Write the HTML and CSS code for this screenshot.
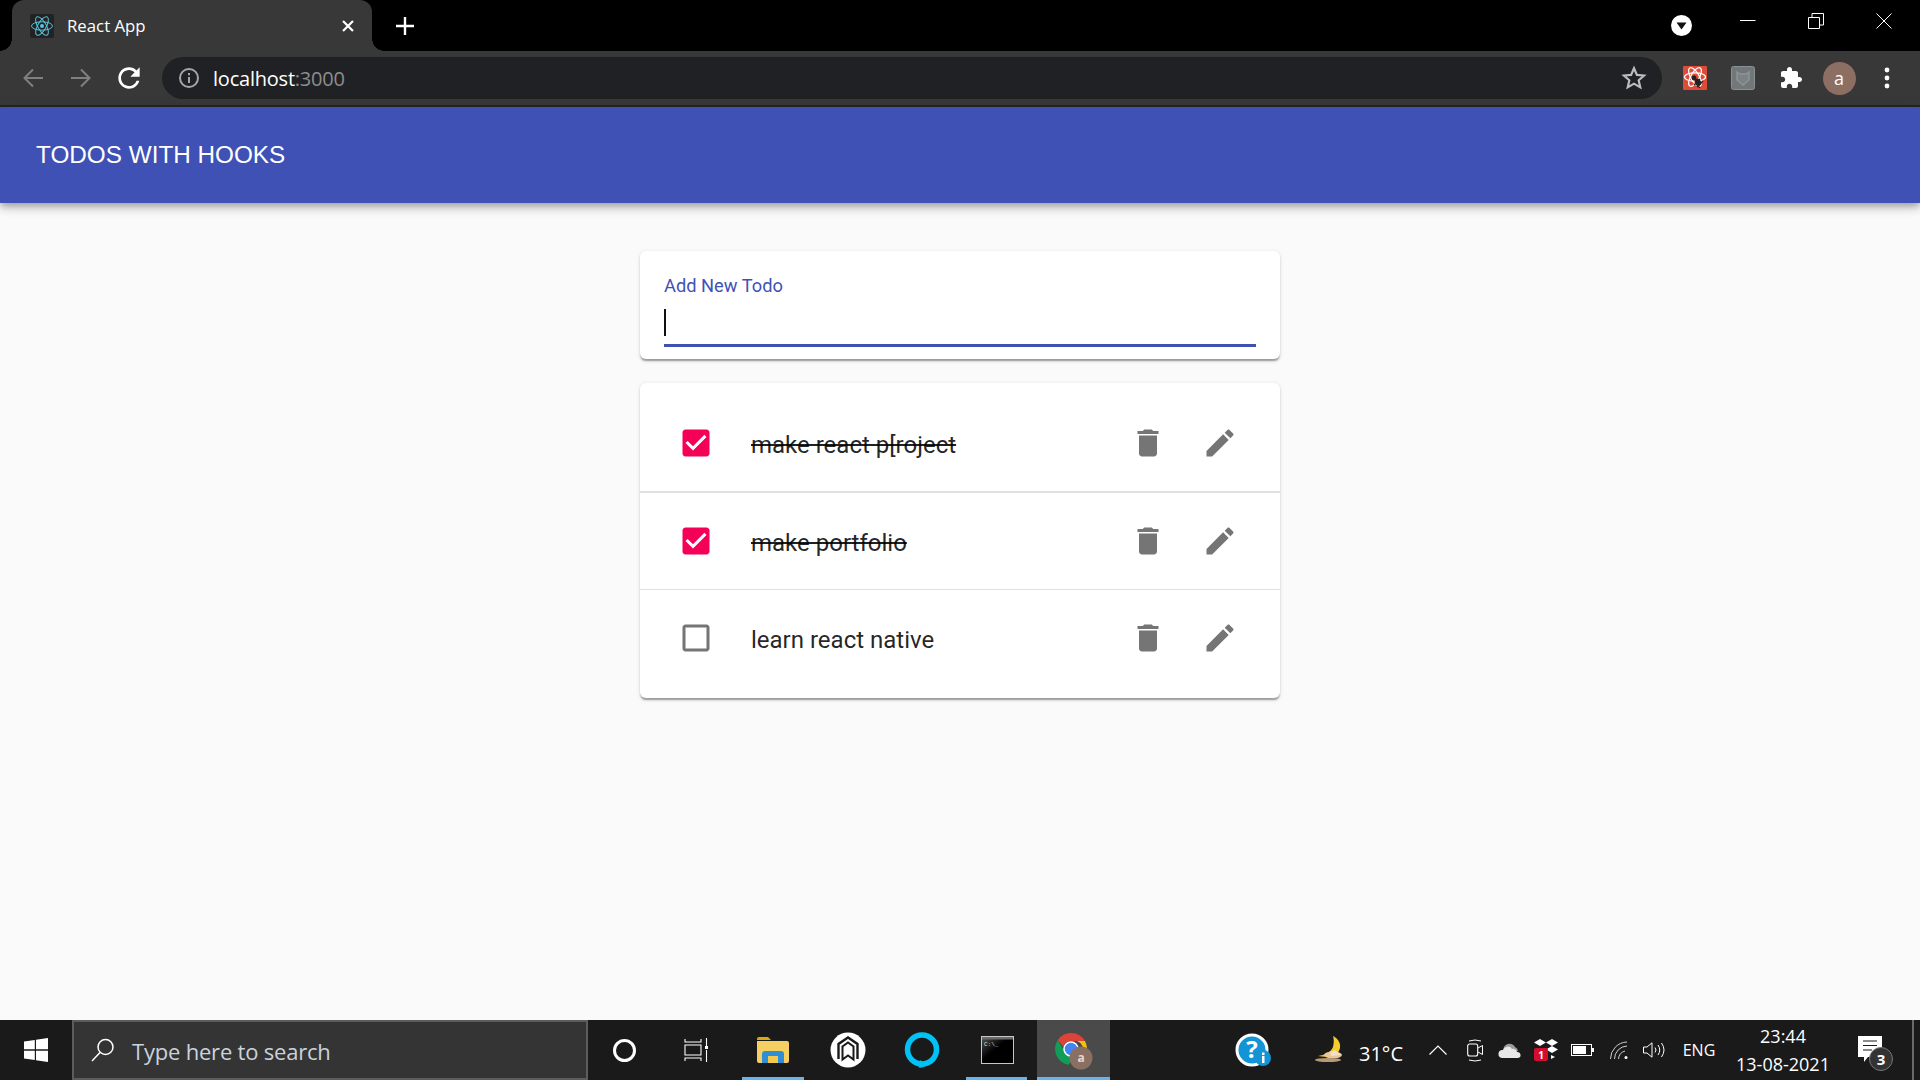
FILE: index.html
```html
<!DOCTYPE html>
<html lang="en">
<head>
<meta charset="utf-8">
<title>React App</title>
<link rel="stylesheet" href="styles.css">
</head>
<body>
<div class="screen">
  <div class="tabstrip">
    <div class="tab">
      <svg class="favicon" viewBox="0 0 24 24"><rect width="24" height="24" rx="2" fill="#222"/><g fill="none" stroke="#58c4dc" stroke-width="1"><ellipse cx="12" cy="12" rx="10.5" ry="4.2"/><ellipse cx="12" cy="12" rx="10.5" ry="4.2" transform="rotate(60 12 12)"/><ellipse cx="12" cy="12" rx="10.5" ry="4.2" transform="rotate(120 12 12)"/></g><circle cx="12" cy="12" r="2" fill="#58c4dc"/></svg>
      <span class="tab-title">React App</span>
      <svg class="tab-close" viewBox="0 0 12 12"><path d="M1 1l10 10M11 1L1 11" stroke="#fff" stroke-width="2.2"/></svg>
    </div>
    <div class="newtab"><svg class="plus" viewBox="0 0 18 18"><path d="M9 0v18M0 9h18" stroke="#fff" stroke-width="2.4"/></svg></div>
    <div class="profile-drop"><svg class="drop-icon" viewBox="0 0 21 21"><circle cx="10.5" cy="10.5" r="10.5" fill="#fff"/><path d="M5.5 7.5h10l-5 7z" fill="#111"/></svg></div>
    <div class="winbtn"><svg class="win-ico" viewBox="0 0 16 16"><path d="M0 7.5h15.5" stroke="#fff"/></svg></div>
    <div class="winbtn"><svg class="win-ico" viewBox="0 0 16 16"><path d="M.5 4.5h11v11H.5zM4 4.5V.5h11.5v11.5h-4" fill="none" stroke="#fff"/></svg></div>
    <div class="winbtn"><svg class="win-ico" viewBox="0 0 16 16"><path d="M.5.5l15 15M15.5.5l-15 15" stroke="#fff"/></svg></div>
  </div>

  <div class="toolbar">
    <div class="navbtn"><svg class="ico24" viewBox="0 0 24 24"><path d="M22 12H4M12 3.5L3.5 12l8.5 8.5" fill="none" stroke="#808080" stroke-width="2"/></svg></div>
    <div class="navbtn"><svg class="ico24" viewBox="0 0 24 24"><path d="M2 12h18M12 3.5l8.500 8.500L12 20.500" fill="none" stroke="#808080" stroke-width="2"/></svg></div>
    <div class="navbtn"><svg class="ico30" viewBox="0 0 24 24"><path fill="#fff" d="M17.650 6.350C16.200 4.900 14.210 4 12 4c-4.420 0-7.990 3.580-7.990 8s3.570 8 7.990 8c3.730 0 6.840-2.550 7.730-6h-2.080c-.82 2.330-3.040 4-5.650 4-3.310 0-6-2.690-6-6s2.690-6 6-6c1.660 0 3.140.69 4.220 1.780L13 11h7V4l-2.350 2.350z"/></svg></div>
    <div class="omnibox">
      <svg class="info" viewBox="0 0 20 20"><circle cx="10" cy="10" r="9" fill="none" stroke="#a6a6a6" stroke-width="2"/><path d="M10 9v6M10 5v2.200" stroke="#a6a6a6" stroke-width="2"/></svg>
      <span class="url">localhost<span class="url-port">:3000</span></span>
      <svg class="star" viewBox="0 0 24 24"><path d="M12 3l2.700 6.100 6.600.6-5 4.400 1.500 6.500L12 17.200l-5.800 3.400 1.500-6.500-5-4.400 6.600-.6z" fill="none" stroke="#bdbdbd" stroke-width="2"/></svg>
    </div>
    <div class="extensions">
      <div class="navbtn"><svg class="ico24" viewBox="0 0 24 24"><rect width="24" height="24" rx="1" fill="#dd4b39"/><g fill="none" stroke="#fff" stroke-width="1.200"><ellipse cx="12" cy="11" rx="10.500" ry="4.200"/><ellipse cx="12" cy="11" rx="10.500" ry="4.200" transform="rotate(60 12 11)"/><ellipse cx="12" cy="11" rx="10.500" ry="4.200" transform="rotate(120 12 11)"/></g><circle cx="11" cy="12" r="2.400" fill="#222"/><ellipse cx="15" cy="16" rx="2.800" ry="3.800" fill="#222" transform="rotate(-40 15 16)"/><path d="M11 19l6-6M14 21l6-6M12 17l5 5" stroke="#222" stroke-width="1.200"/></svg></div>
      <div class="navbtn"><svg class="ico24" viewBox="0 0 24 24"><rect x=".5" y=".5" width="23" height="23" rx="2" fill="#727779" stroke="#8b9193"/><path d="M6 6l3 2h6l3-2v8l-6 5-6-5z" fill="#7d8385" stroke="#8e9496" stroke-width="1.500"/></svg></div>
      <div class="navbtn"><svg class="ico24" viewBox="0 0 24 24"><path fill="#fff" d="M20.500 11H19V7c0-1.100-.9-2-2-2h-4V3.500C13 2.120 11.880 1 10.500 1S8 2.120 8 3.500V5H4c-1.100 0-1.990.9-1.990 2v3.800H3.500c1.490 0 2.700 1.210 2.700 2.700s-1.210 2.700-2.700 2.700H2V20c0 1.100.9 2 2 2h3.800v-1.500c0-1.490 1.210-2.700 2.700-2.700 1.490 0 2.700 1.210 2.700 2.700V22H17c1.100 0 2-.9 2-2v-4h1.500c1.380 0 2.500-1.120 2.500-2.500S21.880 11 20.500 11z"/></svg></div>
      <div class="navbtn"><span class="avatar">a</span></div>
      <div class="navbtn"><svg class="dots" viewBox="0 0 6 22"><circle cx="3" cy="3" r="2.400" fill="#fff"/><circle cx="3" cy="11" r="2.400" fill="#fff"/><circle cx="3" cy="19" r="2.400" fill="#fff"/></svg></div>
    </div>
  </div>
  <div class="toolbar-line"></div>

  <header class="appbar"><h1 class="app-title">TODOS WITH HOOKS</h1></header>

  <main class="page">
    <section class="card form-card">
      <label class="field-label">Add New Todo</label>
      <div class="caret"></div>
      <div class="underline"></div>
    </section>

    <section class="card list-card">
      <div class="row">
        <svg class="mui check-on" viewBox="0 0 24 24"><path d="M19 3H5c-1.110 0-2 .9-2 2v14c0 1.100.89 2 2 2h14c1.110 0 2-.9 2-2V5c0-1.100-.89-2-2-2zm-9 14l-5-5 1.410-1.410L10 14.170l7.590-7.590L19 8l-9 9z"/></svg>
        <span class="todo done">make react p[roject</span>
        <svg class="mui act" viewBox="0 0 24 24"><path d="M6 19c0 1.100.9 2 2 2h8c1.100 0 2-.9 2-2V7H6v12zM19 4h-3.500l-1-1h-5l-1 1H5v2h14V4z"/></svg>
        <svg class="mui act" viewBox="0 0 24 24"><path d="M3 17.250V21h3.750L17.810 9.940l-3.750-3.750L3 17.250zM20.710 7.040c.39-.39.39-1.020 0-1.410l-2.340-2.340c-.39-.39-1.020-.39-1.410 0l-1.830 1.830 3.750 3.750 1.830-1.830z"/></svg>
      </div>
      <div class="divider thick"></div>
      <div class="row">
        <svg class="mui check-on" viewBox="0 0 24 24"><path d="M19 3H5c-1.110 0-2 .9-2 2v14c0 1.100.89 2 2 2h14c1.110 0 2-.9 2-2V5c0-1.100-.89-2-2-2zm-9 14l-5-5 1.410-1.410L10 14.170l7.590-7.590L19 8l-9 9z"/></svg>
        <span class="todo done">make portfolio</span>
        <svg class="mui act" viewBox="0 0 24 24"><path d="M6 19c0 1.100.9 2 2 2h8c1.100 0 2-.9 2-2V7H6v12zM19 4h-3.500l-1-1h-5l-1 1H5v2h14V4z"/></svg>
        <svg class="mui act" viewBox="0 0 24 24"><path d="M3 17.250V21h3.750L17.810 9.940l-3.750-3.750L3 17.250zM20.710 7.040c.39-.39.39-1.020 0-1.410l-2.340-2.340c-.39-.39-1.020-.39-1.410 0l-1.830 1.830 3.750 3.750 1.830-1.830z"/></svg>
      </div>
      <div class="divider"></div>
      <div class="row">
        <svg class="mui act" viewBox="0 0 24 24"><path d="M19 5v14H5V5h14m0-2H5c-1.100 0-2 .9-2 2v14c0 1.100.9 2 2 2h14c1.100 0 2-.9 2-2V5c0-1.100-.9-2-2-2z"/></svg>
        <span class="todo">learn react native</span>
        <svg class="mui act" viewBox="0 0 24 24"><path d="M6 19c0 1.100.9 2 2 2h8c1.100 0 2-.9 2-2V7H6v12zM19 4h-3.500l-1-1h-5l-1 1H5v2h14V4z"/></svg>
        <svg class="mui act" viewBox="0 0 24 24"><path d="M3 17.250V21h3.750L17.810 9.940l-3.750-3.750L3 17.250zM20.710 7.040c.39-.39.39-1.020 0-1.410l-2.340-2.340c-.39-.39-1.020-.39-1.410 0l-1.830 1.830 3.750 3.750 1.830-1.830z"/></svg>
      </div>
    </section>
  </main>

  <footer class="taskbar">
    <div class="start"><svg class="winlogo" viewBox="0 0 24 24"><path fill="#fff" d="M0 3.500l10.800-1.500v9.300H0zM12 1.800L24 0v11.300H12zM0 12.700h10.800V22L0 20.500zM12 12.700h12V24l-12-1.800z"/></svg></div>
    <div class="searchbox">
      <svg class="magnifier" viewBox="0 0 24 24"><circle cx="14.500" cy="9" r="7.500" fill="none" stroke="#fff" stroke-width="1.500"/><path d="M9 14.500L1 23" stroke="#fff" stroke-width="1.500"/></svg>
      <span class="search-text">Type here to search</span>
    </div>
    <div class="tb-slot"><span class="cortana"></span></div>
    <div class="tb-slot"><svg class="taskview" viewBox="0 0 24 24"><path d="M1 1v3h16V1M1 23v-3h16v3M1 7h16v10H1zM22.500 0v8M22.500 12v12" fill="none" stroke="#fff" stroke-width="1.100"/><rect x="21" y="8" width="3" height="3" fill="#fff"/></svg></div>
    <div class="apps">
      <div class="app running"><svg class="app-ico" viewBox="0 0 32 26"><path fill="#e0a50f" d="M0 2a2 2 0 0 1 2-2h9l3 3h-14z"/><path fill="#f6cf62" d="M0 4h30a2 2 0 0 1 2 2v18a2 2 0 0 1-2 2H2a2 2 0 0 1-2-2z"/><path fill="#2f8fd6" d="M5 26V17a3 3 0 0 1 3-3h16a3 3 0 0 1 3 3v9h-6v-7H11v7z"/><rect x="11" y="19" width="10" height="7" fill="#f4c94f"/></svg></div>
      <div class="app"><svg class="app-ico round" viewBox="0 0 36 36"><circle cx="18" cy="18" r="17.500" fill="#fff"/><path d="M8.500 27V12L18 5.500 27.500 12v15" fill="none" stroke="#1a1a1a" stroke-width="2.400"/><path d="M12.500 27.500V14.500L18 10.500l5.500 4v13L18 23.500z" fill="none" stroke="#1a1a1a" stroke-width="2"/></svg></div>
      <div class="app"><svg class="app-ico round" viewBox="0 0 36 36"><circle cx="18" cy="17.500" r="14.500" fill="none" stroke="#00c2f5" stroke-width="5.500"/><path d="M16 28l-1.500 7.500c3 .5 6-.5 8-2.500z" fill="#00c2f5"/></svg></div>
      <div class="app running"><svg class="app-ico term" viewBox="0 0 33 28"><defs><linearGradient id="termglow" x1="0" y1="0" x2="1" y2="1"><stop offset="0" stop-color="#555"/><stop offset=".45" stop-color="#000"/></linearGradient></defs><rect x=".5" y=".5" width="32" height="27" fill="url(#termglow)" stroke="#c8c8c8"/><rect x="1" y="1" width="31" height="2.500" fill="#6a6a6a"/><text class="term-text" x="3" y="10">C:\_</text></svg></div>
      <div class="app active running"><svg class="app-ico chrome" viewBox="0 0 38 38"><path fill="#db4437" d="M16 0a16 16 0 0 1 13.900 8H16a8 8 0 0 0-7.700 5.800L2.800 7A16 16 0 0 1 16 0z"/><path fill="#f4c20d" d="M29.900 8a16 16 0 0 1-10 23.500l7-12A8 8 0 0 0 22 8z"/><path fill="#0f9d58" d="M2.800 7l7 12a8 8 0 0 0 9.500 3.800l-5.500 9A16 16 0 0 1 2.800 7z"/><circle cx="16" cy="16" r="7" fill="#4285f4" stroke="#fff" stroke-width="1.500"/><circle cx="26" cy="25" r="11.500" fill="#8a6f63"/><text class="chrome-a" x="26" y="29" text-anchor="middle">a</text></svg></div>
    </div>
    <div class="tray">
      <div class="s-help"><svg class="help" viewBox="0 0 38 34"><circle cx="17" cy="17" r="15" fill="#1394d6" stroke="#fff" stroke-width="3"/><text class="help-q" x="17" y="25" text-anchor="middle">?</text><circle cx="28" cy="25" r="8" fill="#1394d6"/><rect x="27" y="23" width="2.500" height="7" fill="#fff"/><rect x="27" y="19.500" width="2.500" height="2.500" fill="#fff"/></svg></div>
      <div class="s-moon"><svg class="moon" viewBox="0 0 34 28"><path d="M19 0c6 3 9 9 6 15-3 5-11 7-21 5 7-1 13-4 15-9 1-4 1-8 0-11z" fill="#f6cb2c"/><ellipse cx="19" cy="19" rx="9" ry="3.500" fill="#e8c89a"/><ellipse cx="14" cy="24" rx="13" ry="2" fill="#b79a78"/><path d="M16 16l5-2 6 5-10 1z" fill="#f2dfc4"/></svg></div>
      <span class="s-temp">31°C</span>
      <div class="s-chev"><svg class="chev" viewBox="0 0 18 10"><path d="M.5 9.500L9 1l8.500 8.500" fill="none" stroke="#fff" stroke-width="1.200"/></svg></div>
      <div class="s-cam"><svg class="cam" viewBox="0 0 16 23"><rect x=".7" y="5" width="10" height="12" rx="2" fill="none" stroke="#fff" stroke-width="1.100"/><path d="M11 9l4.500-2.500v9L11 13M2 2q6-2 12 0M2 21q6 2 12 0" fill="none" stroke="#fff" stroke-width="1"/></svg></div>
      <div class="s-cloud"><svg class="cloud" viewBox="0 0 24 16"><path d="M6 11a6 6 0 0 1 11-6 5 5 0 0 1 3 4z" fill="#9c9c9c"/><path d="M4 16a4 4 0 0 1 1-8 5 5 0 0 1 9-1 4 4 0 0 1 5 3 3 3 0 0 1 1 6z" fill="#e8e8e8"/></svg></div>
      <div class="s-box"><svg class="dropbox" viewBox="0 0 24 22"><path fill="#fff" d="M6 0l6 3.500L6 7 0 3.500zM18 0l6 3.500L18 7l-6-3.500zM18 7l6 3.500-6 3.500-6-3.500zM17 16l4 2-4 2z"/><rect y="9" width="14" height="13" rx="2" fill="#d40d2e"/><text class="badge-one" x="7" y="20" text-anchor="middle">1</text></svg></div>
      <div class="s-batt"><svg class="batt" viewBox="0 0 23 12"><rect x=".5" y=".5" width="20" height="11" fill="none" stroke="#fff"/><rect x="2" y="2" width="13" height="8" fill="#fff"/><rect x="21" y="4" width="2" height="4" fill="#fff"/></svg></div>
      <div class="s-wifi"><svg class="wifi" viewBox="0 0 18 18"><path d="M.5 18A17 17 0 0 1 17 1M4.500 18A13 13 0 0 1 17 5M8.500 18A9 9 0 0 1 15 10" fill="none" stroke="#cfcfcf" stroke-width="1"/><circle cx="16" cy="16.500" r="1.500" fill="#fff"/></svg></div>
      <div class="s-sound"><svg class="sound" viewBox="0 0 22 16"><path d="M.5 5h3.500L9 .8v14.400L4 11H.5z" fill="none" stroke="#fff"/><path d="M12 5.500q2 2.500 0 5M15 3q3.500 5 0 10M18.500 1q5 7 0 14" fill="none" stroke="#fff"/></svg></div>
      <span class="s-lang">ENG</span>
      <div class="s-clock"><span>23:44</span><span>13-08-2021</span></div>
      <div class="s-notif"><svg class="notif" viewBox="0 0 36 36"><path d="M0 0h24v21H10l-4 5v-5H0z" fill="#fff" transform="translate(0 1)"/><path d="M5 6h14M5 10.500h14M5 15h9" stroke="#1a1a1a" stroke-width="1.200"/><circle cx="23" cy="24" r="11.500" fill="#333" stroke="#777" stroke-width="1"/><text class="notif-n" x="23" y="30" text-anchor="middle">3</text></svg></div>
      <div class="s-edge"></div>
    </div>
  </footer>
</div>
</body>
</html>
```

FILE: styles.css
```css
* { box-sizing: border-box; }
html, body { margin: 0; height: 100%; overflow: hidden; }
body { font-family: "Roboto", "Liberation Sans", sans-serif; background: #fafafa; }
.screen { display: flex; flex-direction: column; width: 1920px; height: 1080px; }

/* browser chrome */
.tabstrip { display: flex; align-items: center; height: 51px; flex: none; background: #000; padding: 0 2px 0 12px; }
.tab { position: relative; display: flex; align-items: center; width: 360px; height: 51px; padding: 0 18px; background: #383838; border-radius: 12px 12px 0 0; color: #fff; font: 16.800px "Open Sans", "Noto Sans", sans-serif; }
.tab::before, .tab::after { content: ""; position: absolute; bottom: 0; width: 12px; height: 12px; }
.tab::before { left: -12px; background: radial-gradient(circle at 0 0, #000 11.500px, #383838 12px); }
.tab::after { right: -12px; background: radial-gradient(circle at 100% 0, #000 11.500px, #383838 12px); }
.favicon { width: 24px; height: 24px; flex: none; }
.tab-title { margin-left: 13px; flex: 1; }
.tab-close { width: 12px; height: 12px; flex: none; }
.newtab { width: 42px; margin-left: 12px; display: flex; justify-content: center; }
.plus { width: 18px; height: 18px; }
.profile-drop { width: 42px; margin-left: auto; margin-right: 12px; display: flex; justify-content: center; }
.drop-icon { width: 21px; height: 21px; }
.winbtn { width: 68px; height: 42px; align-self: flex-start; display: flex; align-items: center; justify-content: center; }
.win-ico { width: 16px; height: 16px; }

.toolbar { display: flex; align-items: center; height: 54px; flex: none; background: #383838; padding: 0 9px; }
.toolbar-line { height: 2px; flex: none; background: #262626; }
.navbtn { width: 48px; height: 48px; flex: none; display: flex; align-items: center; justify-content: center; }
.ico24 { width: 24px; height: 24px; }
.ico30 { width: 32px; height: 32px; }
.omnibox { display: flex; align-items: center; width: 1500px; height: 42px; margin-left: 9px; padding: 0 15px 0 17px; background: #202124; border-radius: 21px; }
.info { width: 20px; height: 20px; flex: none; }
.url { margin-left: 14px; flex: 1; color: #fff; font: 20px "Open Sans", "Noto Sans", sans-serif; letter-spacing: -0.220px; }
.url-port { color: #8e8e8e; }
.star { width: 26px; height: 26px; flex: none; }
.extensions { display: flex; margin-left: 9px; }
.avatar { width: 33px; height: 33px; border-radius: 50%; background: #8d6e63; color: #fff; font: 18px/32px "Open Sans", sans-serif; text-align: center; }
.dots { width: 6px; height: 22px; }

/* app */
.appbar { display: flex; align-items: center; height: 96px; flex: none; padding: 0 36px; background: #3f51b5; position: relative; box-shadow: 0 3px 6px -1px rgba(0,0,0,.2), 0 6px 8px 0 rgba(0,0,0,.14), 0 1.500px 15px 0 rgba(0,0,0,.12); }
.app-title { margin: 0; color: #fff; font: 400 24.300px "Liberation Sans", Arial, sans-serif; }
.page { flex: 1; display: flex; flex-direction: column; align-items: center; gap: 24px; padding-top: 48px; background: #fafafa; }
.card { width: 640px; background: #fff; border-radius: 6px; box-shadow: 0 3px 1.500px -1.500px rgba(0,0,0,.2), 0 1.500px 1.500px 0 rgba(0,0,0,.14), 0 1.500px 4.500px 0 rgba(0,0,0,.12); }
.form-card { height: 108px; padding: 23px 24px 12px; }
.field-label { display: block; height: 24px; color: #3f51b5; font-size: 18.300px; line-height: 24px; }
.caret { width: 2px; height: 27px; margin-top: 11px; background: #111; }
.underline { height: 3px; margin-top: 8px; background: #3f51b5; }
.list-card { padding: 12px 0; }
.row { display: flex; align-items: center; height: 96px; padding: 0 42px 0 38px; }
.divider { height: 1px; background: #e0e0e0; }
.divider.thick { height: 2px; }
.mui { width: 36px; height: 36px; flex: none; }
.check-on { fill: #f50057; }
.act { fill: #757575; }
.act + .act { margin-left: 36px; }
.todo { flex: 1; margin-left: 37px; padding-top: 4px; color: rgba(0,0,0,.87); font-size: 24px; line-height: 36px; }
.todo.done { text-decoration: line-through; }

/* taskbar */
.taskbar { display: flex; align-items: stretch; height: 60px; flex: none; background: #1a1a1a; color: #fff; font-family: "Open Sans", "Noto Sans", sans-serif; }
.start { width: 72px; display: flex; align-items: center; justify-content: center; }
.winlogo { width: 24px; height: 24px; }
.searchbox { display: flex; align-items: center; width: 516px; padding-left: 17px; background: #343434; border: 2px solid #5c5c5c; }
.magnifier { width: 24px; height: 24px; flex: none; }
.search-text { margin-left: 17px; padding-top: 2px; color: #c9d3dc; font-size: 22px; letter-spacing: -0.200px; }
.tb-slot { width: 72px; display: flex; align-items: center; justify-content: center; }
.cortana { width: 23px; height: 23px; border-radius: 50%; border: 3px solid #fff; }
.taskview { width: 24px; height: 24px; }
.apps { display: flex; margin-left: 4px; }
.app { width: 74.600px; display: flex; align-items: center; justify-content: center; position: relative; }
.app.running::after { content: ""; position: absolute; left: 6px; right: 7px; bottom: 0; height: 3px; background: #6cb2e8; }
.app.active { width: 73px; margin-left: 2.600px; background: #4a4a4a; }
.app.active::after { left: 0; right: 0; }
.app-ico { width: 32px; height: 26px; }
.app-ico.round { width: 36px; height: 36px; }
.app-ico.term { width: 33px; height: 28px; }
.app-ico.chrome { width: 38px; height: 38px; margin: 4px 0 0 2px; }
.term-text { fill: #ddd; font: 6px "Liberation Mono", monospace; }
.chrome-a { fill: #e4d8d2; font: bold 12px "Open Sans", sans-serif; }
.tray { display: flex; align-items: center; margin-left: auto; height: 60px; }
.s-help { width: 40px; display: flex; justify-content: center; margin-left: 2px; margin-right: 28px; }
.help { width: 38px; height: 34px; }
.help-q { fill: #fff; font: bold 24px "Open Sans", sans-serif; }
.s-moon { width: 57px; display: flex; justify-content: center; }
.moon { width: 34px; height: 28px; }
.s-temp { width: 53px; padding-top: 6px; font-size: 20px; }
.s-chev { width: 52px; display: flex; justify-content: center; }
.chev { width: 18px; height: 10px; }
.s-cam { width: 22px; display: flex; justify-content: center; }
.cam { width: 16px; height: 23px; }
.s-cloud { width: 48px; display: flex; justify-content: center; }
.cloud { width: 24px; height: 16px; }
.s-box { width: 24px; display: flex; justify-content: center; }
.dropbox { width: 24px; height: 22px; }
.badge-one { fill: #fff; font: bold 10px "Open Sans", sans-serif; }
.s-batt { width: 48px; display: flex; justify-content: center; }
.batt { width: 23px; height: 12px; }
.s-wifi { width: 26px; display: flex; justify-content: center; }
.wifi { width: 18px; height: 18px; }
.s-sound { width: 44px; display: flex; justify-content: center; }
.sound { width: 22px; height: 16px; }
.s-lang { width: 46px; text-align: center; font-size: 16px; }
.s-clock { width: 122px; display: flex; flex-direction: column; align-items: center; gap: 6px; font-size: 18px; line-height: 22px; }
.s-notif { width: 68px; display: flex; justify-content: flex-start; padding-left: 14px; }
.notif { width: 36px; height: 36px; margin-top: 6px; }
.notif-n { fill: #fff; font: bold 15px "Open Sans", sans-serif; }
.s-edge { width: 2px; height: 60px; margin-right: 6px; background: #6a6a6a; }
```
